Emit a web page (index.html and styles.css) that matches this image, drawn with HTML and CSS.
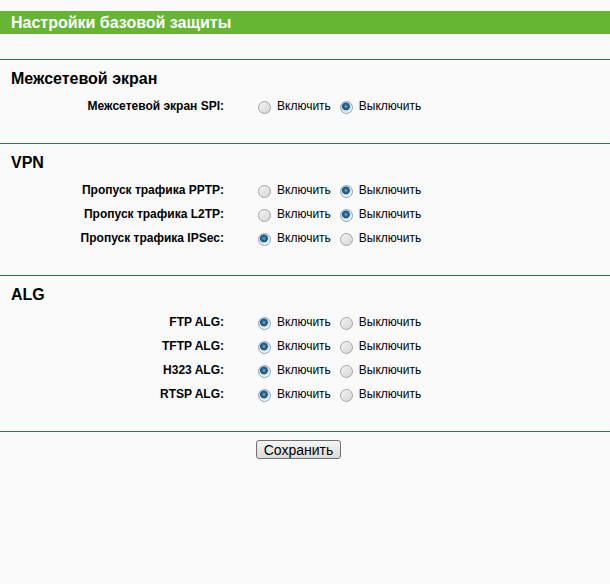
FILE: index.html
```html
<!doctype html>
<html>

<head>
    <meta charset="utf-8">
    <title>Настройки базовой защиты</title>
    <link rel="stylesheet" href="styles.css">
</head>

<body>
    <div class="title">Настройки базовой защиты</div>

    <!-- Межсетевой экран -->
    <div class="section">
        <h3>Межсетевой экран</h3>
        <div class="row">
            <span class="label">Межсетевой экран SPI:</span>
            <span class="opts">
                <input type="radio" name="spi"><span class="opt">Включить</span>
                <input type="radio" name="spi" checked><span class="opt">Выключить</span>
            </span>
        </div>
    </div>

    <!-- VPN -->
    <div class="section">
        <h3>VPN</h3>
        <div class="row">
            <span class="label">Пропуск трафика PPTP:</span>
            <span class="opts">
                <input type="radio" name="pptp"><span class="opt">Включить</span>
                <input type="radio" name="pptp" checked><span class="opt">Выключить</span>
            </span>
        </div>
        <div class="row">
            <span class="label">Пропуск трафика L2TP:</span>
            <span class="opts">
                <input type="radio" name="l2tp"><span class="opt">Включить</span>
                <input type="radio" name="l2tp" checked><span class="opt">Выключить</span>
            </span>
        </div>
        <div class="row">
            <span class="label">Пропуск трафика IPSec:</span>
            <span class="opts">
                <input type="radio" name="ipsec" checked><span class="opt">Включить</span>
                <input type="radio" name="ipsec"><span class="opt">Выключить</span>
            </span>
        </div>
    </div>

    <!-- ALG -->
    <div class="section">
        <h3>ALG</h3>
        <div class="row">
            <span class="label">FTP ALG:</span>
            <span class="opts">
                <input type="radio" name="ftp" checked><span class="opt">Включить</span>
                <input type="radio" name="ftp"><span class="opt">Выключить</span>
            </span>
        </div>
        <div class="row">
            <span class="label">TFTP ALG:</span>
            <span class="opts">
                <input type="radio" name="tftp" checked><span class="opt">Включить</span>
                <input type="radio" name="tftp"><span class="opt">Выключить</span>
            </span>
        </div>
        <div class="row">
            <span class="label">H323 ALG:</span>
            <span class="opts">
                <input type="radio" name="h323" checked><span class="opt">Включить</span>
                <input type="radio" name="h323"><span class="opt">Выключить</span>
            </span>
        </div>
        <div class="row">
            <span class="label">RTSP ALG:</span>
            <span class="opts">
                <input type="radio" name="rtsp" checked><span class="opt">Включить</span>
                <input type="radio" name="rtsp"><span class="opt">Выключить</span>
            </span>
        </div>
    </div>

    <div class="save-row">
        <button class="save">Сохранить</button>
    </div>
</body>

</html>
```

FILE: styles.css
```css
body {
    font-family: "Liberation Sans", Arial, sans-serif;
    margin: 0;
    padding: 11px 0 0;
    background-color: #fafafa;
    color: #000;
}

.title {
    background-color: #66b634;
    color: #fff;
    font-size: 16px;
    font-weight: bold;
    height: 23px;
    line-height: 23px;
    padding-left: 11px;
    margin-bottom: 25px;
}

.section {
    border-top: 1px solid #2b7a56;
    padding-bottom: 25px;
}

.section h3 {
    font-size: 16px;
    line-height: 20px;
    margin: 9px 0 5px 11px;
}

.row {
    display: flex;
    align-items: center;
    height: 24px;
    font-size: 12px;
}

.label {
    width: 224px;
    text-align: right;
    font-weight: bold;
}

.opts {
    display: flex;
    align-items: center;
    margin-left: 34px;
}

.opt {
    margin-right: 9px;
}

.opts input {
    appearance: none;
    -webkit-appearance: none;
    width: 13px;
    height: 13px;
    margin: 2px 6px 0 0;
    border-radius: 50%;
    border: 1px solid #a4a4a4;
    background: linear-gradient(135deg, #f4f4f4, #d6d6d6);
}

.opts input:checked {
    border-color: #8aa3b5;
    background: radial-gradient(circle at 45% 40%, #7fb4d6 0, #236a95 2px, #1b4f73 3.5px, #c7d6e0 4.2px, #f2f5f7 6px);
}

.save-row {
    border-top: 1px solid #2b7a56;
    padding: 8px 13px 0 0;
    text-align: center;
}

.save {
    font-family: "Liberation Sans", Arial, sans-serif;
    font-size: 14px;
    height: 19px;
    padding: 0 7px;
    border: 1px solid #707070;
    border-radius: 3px;
    background: linear-gradient(#f4f4f4, #dcdcdc);
    color: #000;
}
```
